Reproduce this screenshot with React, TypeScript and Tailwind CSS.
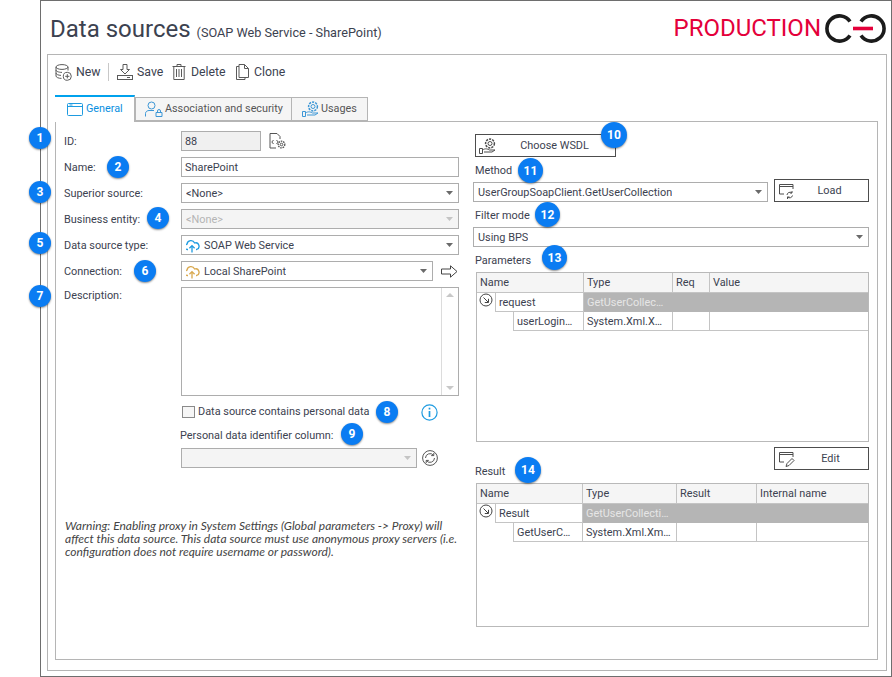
import type { ReactNode } from "react";

const font = "[font-family:'Roboto','Liberation_Sans',sans-serif]";

function Caret({ muted }: { muted?: boolean }) {
    return (
        <svg viewBox="0 0 7 4" className="h-[4px] w-[7px] shrink-0">
            <path d="M0 0h7L3.5 4z" fill={muted ? "#c4c4c4" : "#6a6a6a"} />
        </svg>
    );
}

function CloudIcon({ color }: { color: string }) {
    return (
        <svg viewBox="0 0 16 14" className="-ml-[2px] h-[14px] w-[16px] shrink-0" fill="none" stroke={color} strokeWidth="1.3">
            <path d="M4 10.5H3.2A2.7 2.7 0 0 1 3 5.2 4 4 0 0 1 10.6 4 3.3 3.3 0 0 1 12.6 10.5H12" />
            <path d="M8 13.5V7M5.4 9.2 8 6.6l2.6 2.6" />
        </svg>
    );
}

function Select({ children, className, disabled }: { children?: ReactNode; className: string; disabled?: boolean }) {
    return (
        <div
            className={`flex h-[20px] items-center justify-between border border-[#adadad] pl-[4px] pr-[5px] ${
                disabled ? "bg-[#f4f4f4] text-[#b4b4b4]" : "bg-white"
            } ${className}`}
        >
            <div className="flex items-center gap-[4px] truncate pt-[2px]">{children}</div>
            <Caret muted={disabled} />
        </div>
    );
}

function Row({ label, children }: { label: string; children: ReactNode }) {
    return (
        <div className="flex h-[20px] items-center">
            <div className="w-[117px] shrink-0 pt-[2px]">{label}</div>
            {children}
        </div>
    );
}

function RowArrow() {
    return (
        <div className="flex w-[18px] shrink-0 justify-center">
            <svg viewBox="0 0 14 14" className="h-[14px] w-[14px]" fill="none" stroke="#444" strokeWidth="1">
                <circle cx="7" cy="7" r="6" />
                <path d="M4.5 4.5 9.2 9.2M9.5 5.8v3.7H5.8" />
            </svg>
        </div>
    );
}

function GridTable({
    className,
    cols,
    firstW,
    secondW,
    heads,
    first,
    firstType,
    second,
    secondType,
}: {
    className: string;
    cols: string[];
    firstW: string;
    secondW: string;
    heads: string[];
    first: string;
    firstType: string;
    second: string;
    secondType: string;
}) {
    return (
        <div className={`border border-[#b9b9b9] ${className}`}>
            <div className="flex h-[20px] border-b border-[#c4c4c4] bg-[#f5f5f5]">
                {heads.map((h, i) => (
                    <div
                        key={h}
                        className={`flex h-full items-center pl-[3px] pt-[2px] ${i === 3 ? "flex-1" : "shrink-0 border-r border-[#c4c4c4]"} ${cols[i]}`}
                    >
                        {h}
                    </div>
                ))}
            </div>
            <div className="flex h-[19px]">
                <RowArrow />
                <div className={`flex h-full shrink-0 items-center border-x border-b border-[#c4c4c4] pl-[3px] pt-[2px] ${firstW}`}>{first}</div>
                <div className="flex h-full flex-1 items-center bg-[#b5b5b5] pl-[3px] pt-[2px] text-[#e6e6e6]">{firstType}</div>
            </div>
            <div className="flex h-[19px]">
                <div className="w-[36px] shrink-0" />
                <div className={`flex h-full shrink-0 items-center truncate border-x border-b border-[#c4c4c4] pl-[3px] pt-[2px] ${secondW}`}>{second}</div>
                <div className={`flex h-full shrink-0 items-center border-r border-b border-[#c4c4c4] pl-[3px] pt-[2px] ${cols[1]}`}>{secondType}</div>
                <div className={`h-full shrink-0 border-r border-b border-[#c4c4c4] ${cols[2]}`} />
                <div className="h-full flex-1 border-b border-[#c4c4c4]" />
            </div>
        </div>
    );
}

function Badge({ n, pos }: { n: number; pos: string }) {
    return (
        <div
            className={`absolute flex items-center justify-center rounded-full bg-[#0a7cf2] text-[12px] font-bold text-white shadow-[0_1px_2px_rgba(0,0,0,0.45)] ${pos}`}
        >
            {n}
        </div>
    );
}

function Logo() {
    return (
        <svg viewBox="0 0 62 29" className="h-[29px] w-[62px]" fill="none" strokeWidth="3.6">
            <path d="M25 7.5A12.6 12.6 0 1 0 25 21.5" stroke="#1b1b1b" />
            <path d="M36 7.5A12.6 12.6 0 1 1 36 21.5" stroke="#1b1b1b" />
            <path d="M28 14.5H48" stroke="#e4003a" />
        </svg>
    );
}

function FormToolbar() {
    const stroke = "#5a5a5a";
    return (
        <div className="flex h-[26px] items-center text-[12.3px]">
            <div className="flex w-[53px] shrink-0 items-center gap-[4px]">
                <svg viewBox="0 0 17 17" className="h-[17px] w-[17px]" fill="none" stroke={stroke}>
                    <ellipse cx="7" cy="3" rx="6" ry="2.4" />
                    <path d="M1 3v9c0 1.3 2.5 2.4 5.5 2.4M13 3v3.5M1 6c0 1.3 2.7 2.4 6 2.4M1 9c0 1.3 2.3 2.3 5 2.4" />
                    <circle cx="12.3" cy="12.3" r="4" />
                    <path d="M12.3 10.2v4.2M10.2 12.3h4.2" />
                </svg>
                <span>New</span>
            </div>
            <div className="h-[18px] w-px bg-[#c8c8c8]" />
            <div className="ml-[8px] flex w-[55px] shrink-0 items-center gap-[4px]">
                <svg viewBox="0 0 16 16" className="h-[16px] w-[16px]" fill="none" stroke={stroke}>
                    <path d="M6 .5h4v5h2.5L8 10 3.5 5.5H6z" />
                    <rect x=".5" y="11.5" width="15" height="4" />
                    <path d="M10 13.5h3" />
                </svg>
                <span>Save</span>
            </div>
            <div className="flex w-[64px] shrink-0 items-center gap-[5px]">
                <svg viewBox="0 0 14 16" className="h-[16px] w-[14px]" fill="none" stroke={stroke}>
                    <path d="M.5 2.5h13M5 2.5V.5h4v2M1.8 2.5v13h10.4v-13M4.5 5v8M7 5v8M9.5 5v8" />
                </svg>
                <span>Delete</span>
            </div>
            <div className="flex items-center gap-[5px]">
                <svg viewBox="0 0 13 16" className="h-[16px] w-[13px]" fill="none" stroke={stroke}>
                    <path d="M3 .5h5.5l4 4v9H3zM8.5.5v4h4M3 2.5H.5v13H9v-2" />
                </svg>
                <span>Clone</span>
            </div>
        </div>
    );
}

function GearHand({ color }: { color: string }) {
    return (
        <svg viewBox="0 0 18 16" className="h-[16px] w-[18px] shrink-0" fill="none" stroke={color}>
            <circle cx="11" cy="5.5" r="2" />
            <circle cx="11" cy="5.5" r="4.4" strokeDasharray="2.2 1" strokeWidth="1.5" />
            <path d="M.5 10.5h3v5h-3zM3.5 12c3-2 5-1 7 0h5.5l-3 2H5" />
        </svg>
    );
}

function Tabs() {
    return (
        <div className="flex h-[26px] items-end text-[10.8px]">
            <div className="z-10 -mb-px flex h-[27px] w-[80px] items-center gap-[3px] border-t-2 border-r border-t-[#00a2ed] border-r-[#b5b5b5] bg-white pl-[12px] text-[#0a8fe0]">
                <svg viewBox="0 0 16 13" className="h-[13px] w-[16px]" fill="none" stroke="#1e9be0">
                    <rect x=".5" y=".5" width="15" height="12" rx="1" />
                    <path d="M.5 3.5h15M2.5 2h3" />
                </svg>
                General
            </div>
            <div className="flex h-[24px] w-[157px] shrink-0 items-center gap-[2px] whitespace-nowrap border border-[#b5b5b5] bg-[#f5f5f5] pl-[9px] text-[#555]">
                <svg viewBox="0 0 18 16" className="h-[16px] w-[18px]" fill="none" stroke="#3d97d6">
                    <circle cx="6.5" cy="4.5" r="3.5" />
                    <path d="M.5 15.5v-3c0-2 2-3 3.5-3h5M11 11.5h6v4h-6zM12.5 11.5V10a1.5 1.5 0 0 1 3 0v1.5" />
                </svg>
                Association and security
            </div>
            <div className="flex h-[24px] w-[76px] items-center gap-[1px] border border-l-0 border-[#b5b5b5] bg-[#f5f5f5] pl-[10px] text-[#555]">
                <GearHand color="#3d97d6" />
                Usages
            </div>
        </div>
    );
}

function LeftColumn() {
    return (
        <div className="w-[404px] shrink-0 pl-[8px] pt-[9px]">
            <div className="flex flex-col gap-[6px]">
                <Row label="ID:">
                    <div className="flex h-[20px] w-[80px] items-center border border-[#adadad] bg-[#f0f0f0] pl-[3px] pt-[2px]">88</div>
                    <svg viewBox="0 0 17 16" className="ml-[8px] h-[16px] w-[17px]" fill="none" stroke="#555">
                        <path d="M1 15V.5h7l3 3V6M1 15h6" />
                        <path d="M4.5 7 2.8 9l1.7 2M7.5 7l1.7 2-1.7 2" />
                        <circle cx="12.5" cy="11.5" r="1.3" />
                        <circle cx="12.5" cy="11.5" r="3.3" strokeDasharray="1.6 .8" strokeWidth="1.3" />
                    </svg>
                </Row>
                <Row label="Name:">
                    <div className="flex h-[20px] w-[278px] items-center border border-[#adadad] pl-[3px] pt-[2px]">SharePoint</div>
                </Row>
                <Row label="Superior source:">
                    <Select className="w-[278px]">&lt;None&gt;</Select>
                </Row>
                <Row label="Business entity:">
                    <Select className="w-[278px]" disabled>
                        &lt;None&gt;
                    </Select>
                </Row>
                <Row label="Data source type:">
                    <Select className="w-[278px]">
                        <CloudIcon color="#1e9be0" />
                        SOAP Web Service
                    </Select>
                </Row>
                <Row label="Connection:">
                    <Select className="w-[252px]">
                        <CloudIcon color="#d9a94f" />
                        Local SharePoint
                    </Select>
                    <svg viewBox="0 0 17 13" className="ml-[8px] h-[13px] w-[17px]" fill="none" stroke="#444">
                        <path d="M.5 4h9V.8l6.5 5.7-6.5 5.7V9h-9z" />
                    </svg>
                </Row>
                <div className="flex">
                    <div className="w-[117px] shrink-0 pt-[1px]">Description:</div>
                    <div className="flex h-[109px] w-[278px] justify-end border border-[#adadad]">
                        <div className="flex w-[17px] flex-col items-center justify-between border-l border-[#dcdcdc] py-[5px]">
                            <div className="h-0 w-0 border-x-[4px] border-b-[4px] border-x-transparent border-b-[#c8c8c8]" />
                            <div className="h-0 w-0 border-x-[4px] border-t-[4px] border-x-transparent border-t-[#c8c8c8]" />
                        </div>
                    </div>
                </div>
            </div>
            <div className="ml-[118px] mt-[8px] flex h-[16px] items-center">
                <div className="h-[12px] w-[13px] border border-[#8a8a8a] bg-[#f6f6f6]" />
                <span className="ml-[3px]">Data source contains personal data</span>
                <svg viewBox="0 0 17 17" className="ml-auto mr-[22px] h-[17px] w-[17px]" fill="none" stroke="#1e9be0" strokeWidth="1.2">
                    <circle cx="8.5" cy="8.5" r="7.6" />
                    <path d="M8.5 7v6" strokeWidth="1.7" />
                    <path d="M8.5 3.7v1.8" strokeWidth="1.7" />
                </svg>
            </div>
            <div className="ml-[116px] mt-[8px] leading-[16px]">Personal data identifier column:</div>
            <div className="ml-[117px] mt-[4px] flex items-center gap-[5px]">
                <Select className="w-[236px]" disabled />
                <svg viewBox="0 0 16 16" className="h-[16px] w-[16px]" fill="none" stroke="#555">
                    <circle cx="8" cy="8" r="7.4" />
                    <path d="M3.5 8a4.5 4.5 0 0 1 8-2.7M12.5 8a4.5 4.5 0 0 1-8 2.7M11.8 3v2.6H9.2M4.2 13v-2.6h2.6" />
                </svg>
            </div>
            <p className="ml-px mt-[51px] w-[396px] whitespace-nowrap text-[12px] italic leading-[13px] text-[#444] [font-family:'Lato',sans-serif]">
                Warning: Enabling proxy in System Settings (Global parameters -&gt; Proxy) will
                <br />
                affect this data source. This data source must use anonymous proxy servers (i.e.
                <br />
                configuration does not require username or password).
            </p>
        </div>
    );
}

function OutlineButton({ icon, label, className }: { icon: ReactNode; label: string; className: string }) {
    return (
        <div className={`flex h-[23px] items-center border border-[#4d4d4d] pl-[3px] ${className}`}>
            {icon}
            <span className="flex-1 pt-[2px] text-center">{label}</span>
        </div>
    );
}

function RightColumn() {
    return (
        <div className="w-[396px] shrink-0">
            <OutlineButton className="ml-[2px] mt-[12px] w-[141px] pr-[3px]" label="Choose WSDL" icon={<GearHand color="#4d4d4d" />} />
            <div className="ml-[2px] mt-[6px] leading-[16px]">Method</div>
            <div className="-mt-px flex items-start">
                <Select className="mt-[4px] w-[295px]">UserGroupSoapClient.GetUserCollection</Select>
                <OutlineButton
                    className="ml-[6px] mt-[1px] w-[95px] pr-[6px]"
                    label="Load"
                    icon={
                        <svg viewBox="0 0 18 16" className="ml-px h-[16px] w-[18px] shrink-0" fill="none" stroke="#4d4d4d">
                            <path d="M14 6V1.5H.5v9.5H5M.5 3.5H14" />
                            <path d="M8 12a3 3 0 0 1 5-2M13.5 12.5a3 3 0 0 1-5 1.5M13 8v2h-2M8.5 16v-2h2" />
                        </svg>
                    }
                />
            </div>
            <div className="ml-[2px] mt-[6px] leading-[16px]">Filter mode</div>
            <Select className="mt-[3px] w-[396px]">Using BPS</Select>
            <div className="ml-[2px] mt-[6px] leading-[16px]">Parameters</div>
            <GridTable
                className="ml-[3px] mt-[3px] h-[170px] w-[393px]"
                cols={["w-[107px]", "w-[89px]", "w-[37px]", "w-[158px]"]}
                firstW="w-[89px]"
                secondW="w-[71px]"
                heads={["Name", "Type", "Req", "Value"]}
                first="request"
                firstType="GetUserCollec…"
                second="userLogin…"
                secondType="System.Xml.X…"
            />
            <div className="flex justify-end pt-[5px]">
                <OutlineButton
                    className="w-[95px] pr-[4px]"
                    label="Edit"
                    icon={
                        <svg viewBox="0 0 18 16" className="ml-px h-[16px] w-[18px] shrink-0" fill="none" stroke="#4d4d4d">
                            <path d="M14 6V1.5H.5v9.5H5M.5 3.5H14" />
                            <path d="M7 15.5l1-3 5-5 2 2-5 5z" />
                        </svg>
                    }
                />
            </div>
            <div className="-mt-[6px] ml-[2px] leading-[16px]">Result</div>
            <GridTable
                className="ml-[3px] mt-[3px] h-[144px] w-[393px]"
                cols={["w-[106px]", "w-[94px]", "w-[80px]", "w-[111px]"]}
                firstW="w-[88px]"
                secondW="w-[70px]"
                heads={["Name", "Type", "Result", "Internal name"]}
                first="Result"
                firstType="GetUserCollecti…"
                second="GetUserC…"
                secondType="System.Xml.Xm…"
            />
        </div>
    );
}

export default function App() {
    return (
        <div className={`relative h-[677px] w-[892px] overflow-hidden bg-white pl-[40px] text-[10.9px] text-[#3c4250] ${font}`}>
            <div className="flex h-full flex-col border border-[#6e6e6e] pb-[5px] pl-[6px] pr-[4px]">
                <header className="flex h-[53px] shrink-0 items-start justify-between pt-[12px]">
                    <div className="flex items-baseline">
                        <h1 className="ml-[3px] text-[24px] font-normal leading-[32px]">Data sources</h1>
                        <span className="ml-[6px] text-[12.7px]">(SOAP Web Service - SharePoint)</span>
                    </div>
                    <div className="flex items-center gap-[4px]">
                        <span className="text-[24px] leading-[30px] text-[#e4003a]">PRODUCTION</span>
                        <Logo />
                    </div>
                </header>
                <div className="flex flex-1 flex-col border border-[#b5b5b5] pb-[10px] pl-[7px] pr-[8px]">
                    <div className="h-[40px] shrink-0 pt-[4px]">
                        <FormToolbar />
                    </div>
                    <Tabs />
                    <div className="flex flex-1 gap-[13px] border border-[#b5b5b5]">
                        <LeftColumn />
                        <RightColumn />
                    </div>
                </div>
            </div>

            <Badge n={1} pos="left-[29px] top-[127px] h-[22px] w-[22px]" />
            <Badge n={2} pos="left-[107px] top-[156px] h-[22px] w-[22px]" />
            <Badge n={3} pos="left-[29px] top-[181px] h-[22px] w-[22px]" />
            <Badge n={4} pos="left-[147px] top-[207px] h-[22px] w-[22px]" />
            <Badge n={5} pos="left-[29px] top-[232px] h-[22px] w-[22px]" />
            <Badge n={6} pos="left-[134px] top-[260px] h-[22px] w-[22px]" />
            <Badge n={7} pos="left-[29px] top-[285px] h-[22px] w-[22px]" />
            <Badge n={8} pos="left-[376px] top-[401px] h-[22px] w-[22px]" />
            <Badge n={9} pos="left-[341px] top-[423px] h-[22px] w-[22px]" />
            <Badge n={10} pos="left-[601px] top-[122px] h-[26px] w-[26px]" />
            <Badge n={11} pos="left-[518px] top-[158px] h-[25px] w-[25px]" />
            <Badge n={12} pos="left-[535px] top-[202px] h-[25px] w-[25px]" />
            <Badge n={13} pos="left-[542px] top-[245px] h-[25px] w-[25px]" />
            <Badge n={14} pos="left-[515px] top-[457px] h-[26px] w-[26px]" />
        </div>
    );
}
